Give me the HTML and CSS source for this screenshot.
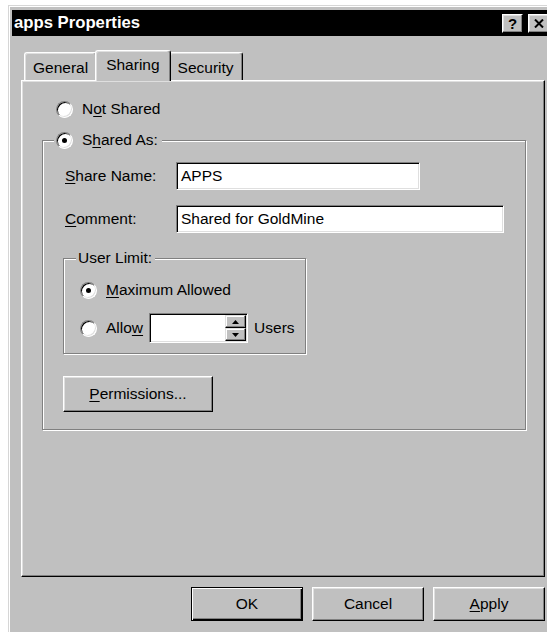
FILE: index.html
```html
<!DOCTYPE html>
<html lang="en">
<head>
<meta charset="utf-8">
<title>apps Properties</title>
<link rel="stylesheet" href="styles.css">
</head>
<body>
<div class="window">
  <div class="titlebar">
    <span class="title">apps Properties</span>
    <div class="caption-buttons">
      <span class="cap-btn">?</span>
      <span class="cap-btn">
        <svg width="10" height="9" viewBox="0 0 10 9"><path d="M1 0.5 L9 8.5 M9 0.5 L1 8.5" stroke="#000" stroke-width="2" fill="none"/></svg>
      </span>
    </div>
  </div>

  <div class="content">
    <div class="tabs">
      <div class="tab">General</div>
      <div class="tab active">Sharing</div>
      <div class="tab">Security</div>
    </div>

    <div class="panel">
      <div class="radio-row top-radio">
        <span class="radio"></span>
        <span>N<u>o</u>t Shared</span>
      </div>

      <fieldset class="group shared">
        <legend><span class="radio-row"><span class="radio checked"></span><span>S<u>h</u>ared As:</span></span></legend>
        <div class="shared-body">
          <div class="field-row">
            <span class="field-label"><u>S</u>hare Name:</span>
            <div class="textbox name-box">APPS</div>
          </div>
          <div class="field-row comment-row">
            <span class="field-label"><u>C</u>omment:</span>
            <div class="textbox comment-box">Shared for GoldMine</div>
          </div>

          <fieldset class="group limit">
            <legend class="plain-legend">User Limit:</legend>
            <div class="limit-body">
              <div class="radio-row">
                <span class="radio checked"></span>
                <span><u>M</u>aximum Allowed</span>
              </div>
              <div class="radio-row allow-row">
                <span class="radio"></span>
                <span>Allo<u>w</u></span>
                <div class="spin">
                  <div class="spin-input"></div>
                  <div class="spin-buttons">
                    <span class="spin-btn">
                      <svg width="7" height="4" viewBox="0 0 7 4"><path d="M3.5 0 L7 4 L0 4 Z" fill="#000"/></svg>
                    </span>
                    <span class="spin-btn">
                      <svg width="7" height="4" viewBox="0 0 7 4"><path d="M0 0 L7 0 L3.5 4 Z" fill="#000"/></svg>
                    </span>
                  </div>
                </div>
                <span class="users">Users</span>
              </div>
            </div>
          </fieldset>

          <button class="btn perm-btn"><span><u>P</u>ermissions...</span></button>
        </div>
      </fieldset>
    </div>

    <div class="dialog-buttons">
      <button class="btn default">OK</button>
      <button class="btn">Cancel</button>
      <button class="btn"><span><u>A</u>pply</span></button>
    </div>
  </div>
</div>
</body>
</html>
```

FILE: styles.css
```css
html, body {
  margin: 0;
  background: #fff;
  overflow: hidden;
}

body {
  font-family: "Liberation Sans", Arial, sans-serif;
  font-size: 15.5px;
  color: #000;
  height: 632px;
}

u {
  text-decoration-thickness: 1px;
  text-underline-offset: 2px;
}

/* Window frame */
.window {
  margin: 5px 0 0 8px;
  width: 539px;
  height: 640px;
  background: #c0c0c0;
  border: 1px solid #d6d6d6;
  padding: 4px 3px 3px 3px;
  box-shadow: inset 1px 1px #fff;
}

.titlebar {
  height: 26px;
  background: #000;
  color: #fff;
  display: flex;
  align-items: center;
  padding: 0 2px;
}

.title {
  font-weight: bold;
  font-size: 16.7px;
}

.caption-buttons {
  margin-left: auto;
  display: flex;
  gap: 5px;
  align-self: flex-start;
  margin-top: 4px;
}

.cap-btn {
  width: 21px;
  height: 19px;
  box-sizing: border-box;
  background: #c0c0c0;
  border: 1px solid;
  border-color: #fff #000 #000 #fff;
  box-shadow: inset -1px -1px #808080, inset 1px 1px #dfdfdf;
  color: #000;
  font-weight: bold;
  font-size: 15px;
  line-height: 1;
  display: flex;
  align-items: center;
  justify-content: center;
}

/* Dialog body */
.content {
  padding: 14px 6px 0 9px;
}

.tabs {
  display: flex;
  align-items: flex-end;
  height: 31px;
  margin-bottom: -1px;
  padding-left: 3px;
  position: relative;
  z-index: 1;
}

.tab {
  height: 28px;
  box-sizing: border-box;
  margin-bottom: 1px;
  padding: 6px 8px 0 8px;
  line-height: 18px;
  background: #c0c0c0;
  border-left: 1px solid #fff;
  border-top: 1px solid #fff;
  border-right: 1px solid #000;
  box-shadow: inset -1px 0 #808080, inset 1px 1px #dfdfdf;
  border-radius: 3px 3px 0 0;
}

.tab.active {
  height: 31px;
  margin: 0 -2px;
  padding: 5px 10px 0 10px;
  position: relative;
  z-index: 2;
}

.panel {
  height: 497px;
  box-sizing: border-box;
  border: 1px solid;
  border-color: #fff #000 #000 #fff;
  box-shadow: inset -1px -1px #808080, inset 1px 1px #dfdfdf;
  padding: 0;
}

/* Radio buttons */
.radio-row {
  display: flex;
  align-items: center;
  gap: 9px;
  height: 18px;
  line-height: 18px;
}

.radio {
  width: 17px;
  height: 17px;
  flex: none;
  box-sizing: border-box;
  border-radius: 50%;
  border: 1px solid;
  border-color: #808080 #fff #fff #808080;
  box-shadow: inset 1px 1px #000, inset -1px -1px #dfdfdf;
  background: #fff;
  position: relative;
}

.radio.checked::after {
  content: "";
  position: absolute;
  left: 5px;
  top: 5px;
  width: 5px;
  height: 5px;
  border-radius: 50%;
  background: #000;
}

.top-radio {
  margin: 19px 0 0 34px;
}

/* Etched group boxes */
.group {
  margin: 0;
  padding: 0;
  min-width: 0;
  box-sizing: border-box;
  border: 1px solid #808080;
  box-shadow: inset 1px 1px #fff, 1px 1px #fff;
}

.group legend {
  background: #c0c0c0;
  line-height: 18px;
  padding: 0 4px 0 2px;
  margin-left: 11px;
}

.shared {
  margin: 13px 0 0 20px;
  width: 484px;
  padding-bottom: 17px;
}

.shared-body {
  padding: 13px 0 0 20px;
}

.field-row {
  display: flex;
  align-items: center;
}

.comment-row {
  margin-top: 15px;
}

.field-label {
  width: 113px;
  box-sizing: border-box;
  padding-left: 2px;
}

.textbox {
  height: 28px;
  box-sizing: border-box;
  border: 1px solid;
  border-color: #808080 #fff #fff #808080;
  box-shadow: inset 1px 1px #000, inset -1px -1px #dfdfdf;
  background: #fff;
  padding: 0 4px;
  line-height: 26px;
}

.name-box {
  width: 244px;
}

.comment-box {
  width: 328px;
}

.limit {
  margin-top: 16px;
  width: 243px;
  padding-bottom: 10px;
}

.limit .plain-legend {
  margin-left: 12px;
  padding: 0 3px 0 2px;
}

.limit-body {
  padding: 14px 0 0 16px;
}

.allow-row {
  margin-top: 14px;
  height: 30px;
}

.spin {
  width: 99px;
  height: 30px;
  box-sizing: border-box;
  margin-left: -3px;
  display: flex;
  border: 1px solid;
  border-color: #808080 #fff #fff #808080;
  box-shadow: inset 1px 1px #000, inset -1px -1px #dfdfdf;
  background: #fff;
  padding: 1px;
}

.spin-input {
  flex: 1;
}

.spin-buttons {
  width: 21px;
  display: flex;
  flex-direction: column;
}

.spin-btn {
  flex: 1;
  box-sizing: border-box;
  background: #c0c0c0;
  border: 1px solid;
  border-color: #dfdfdf #000 #000 #dfdfdf;
  box-shadow: inset -1px -1px #808080, inset 1px 1px #fff;
  display: flex;
  align-items: center;
  justify-content: center;
}

.users {
  margin-left: -3px;
}

/* Push buttons */
.btn {
  font: inherit;
  color: #000;
  padding: 0;
  margin: 0;
  height: 34px;
  box-sizing: border-box;
  background: #c0c0c0;
  border: 1px solid;
  border-color: #fff #000 #000 #fff;
  box-shadow: inset -1px -1px #808080, inset 1px 1px #dfdfdf;
  display: flex;
  align-items: center;
  justify-content: center;
}

.btn.default {
  border-color: #000;
  box-shadow: inset 1px 1px #fff, inset -1px -1px #000, inset -2px -2px #808080;
}

.perm-btn {
  margin-top: 22px;
  width: 150px;
  height: 36px;
}

.dialog-buttons {
  display: flex;
  justify-content: flex-end;
  gap: 9px;
  margin-top: 10px;
}

.dialog-buttons .btn {
  width: 112px;
}
```
